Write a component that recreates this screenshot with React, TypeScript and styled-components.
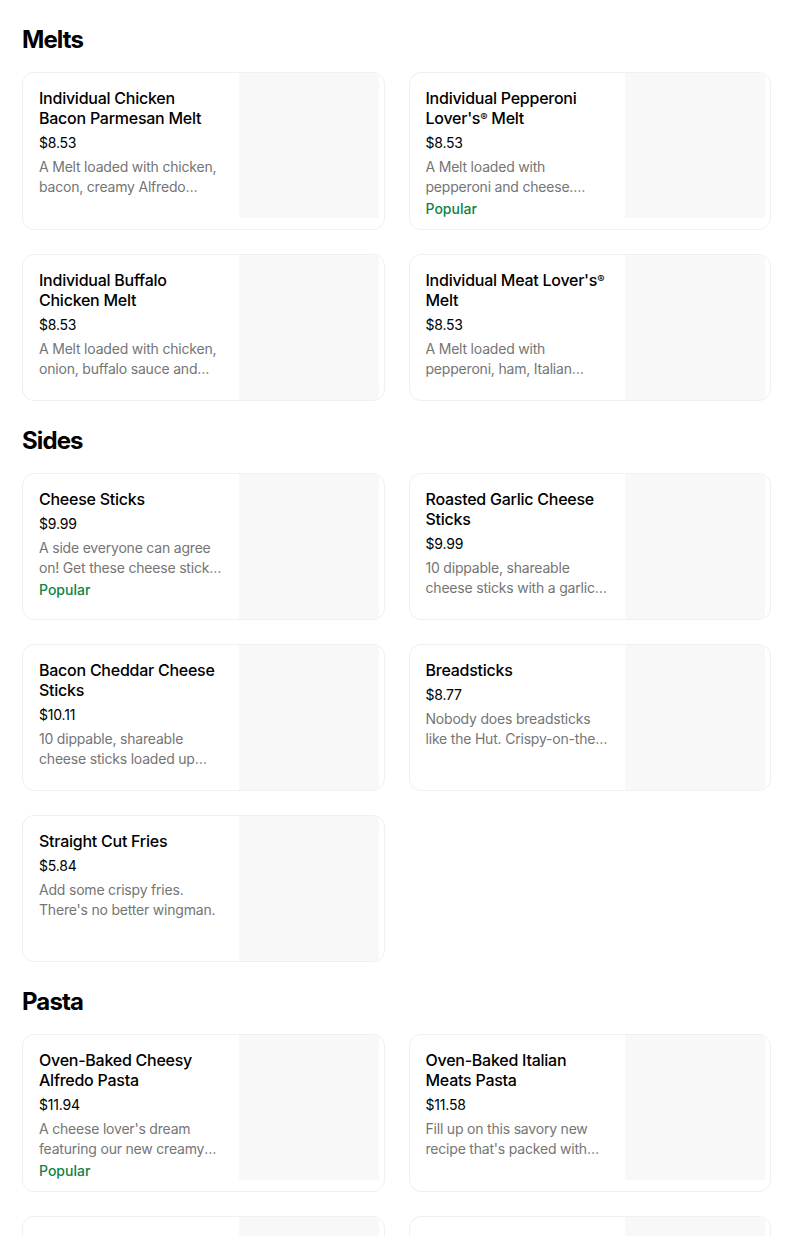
import styled, { createGlobalStyle } from "styled-components";

type Item = {
  title: string;
  price: string;
  description: string;
  popular?: boolean;
};

type Section = {
  name: string;
  items: Item[];
};

const sections: Section[] = [
  {
    name: "Melts",
    items: [
      {
        title: "Individual Chicken Bacon Parmesan Melt",
        price: "$8.53",
        description:
          "A Melt loaded with chicken, bacon, creamy Alfredo sauce and parmesan, baked crispy.",
      },
      {
        title: "Individual Pepperoni Lover's® Melt",
        price: "$8.53",
        description:
          "A Melt loaded with pepperoni and cheese. Served with marinara for dipping.",
        popular: true,
      },
      {
        title: "Individual Buffalo Chicken Melt",
        price: "$8.53",
        description:
          "A Melt loaded with chicken, onion, buffalo sauce and cheese, baked crispy.",
      },
      {
        title: "Individual Meat Lover's® Melt",
        price: "$8.53",
        description:
          "A Melt loaded with pepperoni, ham, Italian sausage, bacon and cheese.",
      },
    ],
  },
  {
    name: "Sides",
    items: [
      {
        title: "Cheese Sticks",
        price: "$9.99",
        description:
          "A side everyone can agree on! Get these cheese sticks with marinara dipping sauce.",
        popular: true,
      },
      {
        title: "Roasted Garlic Cheese Sticks",
        price: "$9.99",
        description:
          "10 dippable, shareable cheese sticks with a garlic seasoning blend.",
      },
      {
        title: "Bacon Cheddar Cheese Sticks",
        price: "$10.11",
        description:
          "10 dippable, shareable cheese sticks loaded up with bacon and cheddar.",
      },
      {
        title: "Breadsticks",
        price: "$8.77",
        description:
          "Nobody does breadsticks like the Hut. Crispy-on-the-outside, soft-on-the-inside.",
      },
      {
        title: "Straight Cut Fries",
        price: "$5.84",
        description: "Add some crispy fries. There's no better wingman.",
      },
    ],
  },
  {
    name: "Pasta",
    items: [
      {
        title: "Oven-Baked Cheesy Alfredo Pasta",
        price: "$11.94",
        description:
          "A cheese lover's dream featuring our new creamy Alfredo sauce and melted cheese.",
        popular: true,
      },
      {
        title: "Oven-Baked Italian Meats Pasta",
        price: "$11.58",
        description:
          "Fill up on this savory new recipe that's packed with pepperoni and Italian sausage.",
      },
      {
        title: "Oven-Baked Chicken Parmesan Pasta",
        price: "$11.94",
        description: "Tender chicken, marinara and parmesan over rotini.",
      },
      {
        title: "Oven-Baked Bacon Mac & Cheese",
        price: "$11.58",
        description: "Creamy mac and cheese topped with crispy bacon.",
      },
    ],
  },
];

const GlobalStyle = createGlobalStyle`
  body {
    margin: 0;
    background: #ffffff;
    font-family: Inter, "Liberation Sans", Arial, sans-serif;
    color: #000000;
  }
`;

const Page = styled.main`
  width: 749px;
  padding: 0 0 0 22px;
`;

const SectionTitle = styled.h2`
  margin: 24px 0 16px;
  font-size: 24px;
  line-height: 32px;
  font-weight: 700;
  letter-spacing: -0.9px;
`;

const Grid = styled.div`
  display: grid;
  grid-template-columns: 1fr 1fr;
  column-gap: 24px;
  row-gap: 24px;
`;

const Card = styled.div`
  display: flex;
  border: 1px solid #f0f0f0;
  border-radius: 12px;
  overflow: hidden;
  background: #ffffff;
`;

const Info = styled.div`
  flex: 1;
  min-width: 0;
  padding: 15px 16px 10px 16px;
  display: flex;
  flex-direction: column;
`;

const Title = styled.div`
  font-size: 16px;
  line-height: 20px;
  font-weight: 500;
  color: #000000;
  letter-spacing: -0.25px;
`;

const Reg = styled.span`
  font-size: 11px;
  line-height: 0;
  vertical-align: 3px;
`;

const Price = styled.div`
  margin-top: 5px;
  font-size: 14px;
  line-height: 20px;
  color: #000000;
  letter-spacing: -0.2px;
`;

const Description = styled.div`
  margin-top: 4px;
  font-size: 14px;
  line-height: 20px;
  color: #757575;
  letter-spacing: -0.2px;
  display: -webkit-box;
  -webkit-line-clamp: 2;
  -webkit-box-orient: vertical;
  overflow: hidden;
`;

const Tag = styled.div`
  margin-top: 2px;
  font-size: 14px;
  line-height: 20px;
  font-weight: 500;
  color: #0e8345;
`;

const Photo = styled.div`
  flex: 0 0 140px;
  height: 145px;
  margin-right: 5px;
  background: #f8f8f8;
`;

const renderTitle = (title: string) => {
  const parts = title.split("®");
  return parts.map((part, i) => (
    <span key={i}>
      {part}
      {i < parts.length - 1 && <Reg>®</Reg>}
    </span>
  ));
};

const MenuCard = ({ item }: { item: Item }) => (
  <Card>
    <Info>
      <Title>{renderTitle(item.title)}</Title>
      <Price>{item.price}</Price>
      <Description>{item.description}</Description>
      {item.popular && <Tag>Popular</Tag>}
    </Info>
    <Photo />
  </Card>
);

export default function App() {
  return (
    <>
      <GlobalStyle />
      <Page>
        {sections.map((section) => (
          <section key={section.name}>
            <SectionTitle>{section.name}</SectionTitle>
            <Grid>
              {section.items.map((item) => (
                <MenuCard key={item.title} item={item} />
              ))}
            </Grid>
          </section>
        ))}
      </Page>
    </>
  );
}
